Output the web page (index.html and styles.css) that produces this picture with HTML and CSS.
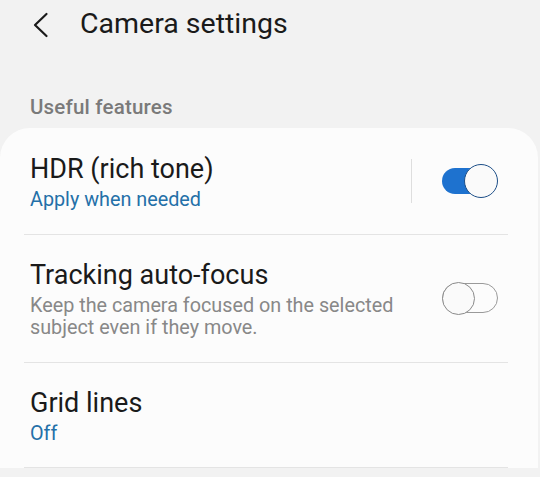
FILE: index.html
```html
<!DOCTYPE html>
<html lang="en">
<head>
<meta charset="utf-8">
<title>Camera settings</title>
<link rel="stylesheet" href="styles.css">
</head>
<body>
<header class="appbar">
  <svg class="back" width="20" height="26" viewBox="0 0 20 26" aria-hidden="true">
    <path d="M16.5 2 L5 13 L16.5 24" fill="none" stroke="#1a1a1a" stroke-width="2.2" stroke-linecap="round" stroke-linejoin="round"/>
  </svg>
  <h1 class="title">Camera settings</h1>
</header>
<div class="section-label">Useful features</div>
<section class="card">
  <div class="row">
    <div class="text">
      <div class="row-title">HDR (rich tone)</div>
      <div class="row-sub blue">Apply when needed</div>
    </div>
    <div class="vsep"></div>
    <div class="switch on"><span class="track"></span><span class="thumb"></span></div>
  </div>
  <div class="row">
    <div class="text">
      <div class="row-title">Tracking auto-focus</div>
      <div class="row-sub gray">Keep the camera focused on the selected<br>subject even if they move.</div>
    </div>
    <div class="switch off"><span class="track"></span><span class="thumb"></span></div>
  </div>
  <div class="row">
    <div class="text">
      <div class="row-title">Grid lines</div>
      <div class="row-sub blue">Off</div>
    </div>
  </div>
</section>
</body>
</html>
```
FILE: styles.css
```css
html, body {
  margin: 0;
  padding: 0;
}
body {
  background: #f2f2f2;
  font-family: Roboto, "Noto Sans", sans-serif;
  color: #1a1a1a;
  width: 540px;
  height: 477px;
  overflow: hidden;
}
.appbar {
  display: flex;
  align-items: center;
  padding: 4px 0 0 30px;
  height: 40px;
}
.back {
  display: block;
  margin-top: 2px;
}
.title {
  margin: 0 0 0 30px;
  font-size: 28.5px;
  font-weight: 400;
  line-height: 40px;
  color: #1a1a1a;
}
.section-label {
  margin: 51px 0 0 30px;
  font-size: 20.5px;
  font-weight: 500;
  letter-spacing: 0.2px;
  line-height: 24px;
  color: #7a7a7a;
}
.card {
  margin: 9px 2px 0 0;
  background: #fcfcfc;
  border-radius: 30px 30px 0 0;
  padding-top: 1px;
}
.row {
  display: flex;
  align-items: center;
  margin: 0 30px 0 24px;
  padding: 22px 10px 22px 6px;
  border-bottom: 1px solid #e4e4e4;
}
.text {
  flex: 1;
}
.row-title {
  font-size: 27px;
  line-height: 37px;
  color: #1a1a1a;
}
.row-sub {
  margin-top: 1px;
  font-size: 19.8px;
  line-height: 22.5px;
}
.blue {
  color: #2470a8;
}
.gray {
  color: #888888;
}
.vsep {
  width: 1px;
  height: 44px;
  background: #dedede;
  margin-right: 30px;
}
.switch {
  position: relative;
  width: 56px;
  height: 34px;
  flex: none;
}
.switch .track {
  position: absolute;
  left: 0;
  top: 4px;
  width: 52px;
  height: 26px;
  border-radius: 13px;
  box-sizing: border-box;
}
.switch .thumb {
  position: absolute;
  top: 0;
  width: 34px;
  height: 34px;
  border-radius: 50%;
  box-sizing: border-box;
  background: #fafafa;
}
.switch.on .track {
  background: #1e72cf;
}
.switch.on .thumb {
  right: 0;
  border: 1.5px solid #1d4f88;
}
.switch.off .track {
  top: 2px;
  width: 56px;
  height: 30px;
  border-radius: 15px;
  border: 1.5px solid #9a9a9a;
}
.switch.off .thumb {
  left: 0;
  top: 1px;
  width: 33px;
  height: 33px;
  border: 1.5px solid #8a8a8a;
}
```
